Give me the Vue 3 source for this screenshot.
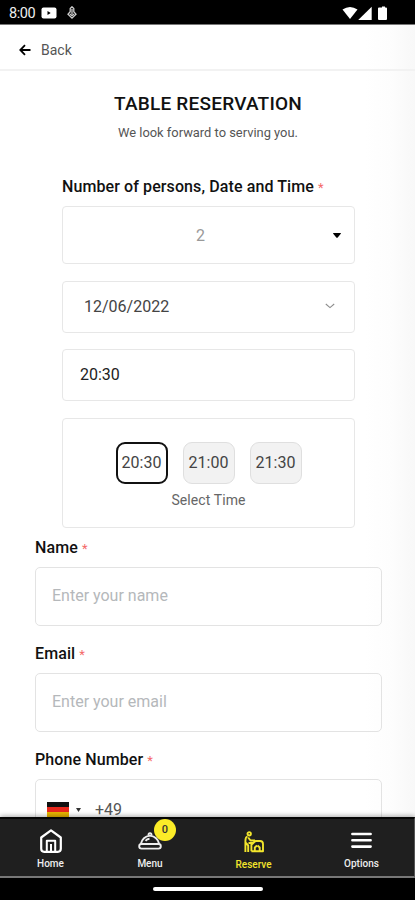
<script setup>
const times = ['20:30', '21:00', '21:30']
const fields = [
  { label: 'Name', placeholder: 'Enter your name' },
  { label: 'Email', placeholder: 'Enter your email' },
]
</script>

<template>
  <div class="screen">
    <div class="status">
      <span class="clock">8:00</span>
      <svg class="video" width="16" height="12" viewBox="0 0 16 12">
        <rect x="0.5" y="0.5" width="15" height="11" rx="2" fill="#fff" />
        <path d="M6.5 3.9v4.2L9.7 6z" fill="#000" />
      </svg>
      <svg class="app" width="10" height="14" viewBox="0 0 10 14" fill="none" stroke="#ccc" stroke-width="1.3">
        <path d="M5 .8L3.2 2.6v3.2L1 8.2l4 4 4-4-2.2-2.4V2.6zM5 3v5M3 8l2 1.6L7 8" />
      </svg>
      <svg class="signals" width="46" height="15" viewBox="0 0 46 15" fill="#fff">
        <path d="M0.5 3.6Q8 -1.8 15.5 3.6L8 13z" />
        <path d="M29.7 0.7v13.4H16.2z" />
        <path d="M38 1.6h2V.6h3v1h1q1 0 1 1V13q0 1-1 1h-7q-1 0-1-1V2.6q0-1 1-1z" />
      </svg>
    </div>

    <header class="top">
      <svg width="12" height="12" viewBox="0 0 12 12" fill="none" stroke="#000" stroke-width="1.8">
        <path d="M11.5 6H1.5M6 1.2L1.3 6 6 10.8" />
      </svg>
      <span>Back</span>
    </header>

    <main class="content">
      <h1>TABLE RESERVATION</h1>
      <p class="sub">We look forward to serving you.</p>

      <section class="booking">
        <div class="label wide">Number of persons, Date and Time <i>*</i></div>
        <div class="box persons">
          <span>2</span>
          <svg width="8" height="5" viewBox="0 0 8 5"><path d="M0 .5Q0 0 .5 0h7Q8 0 8 .5L4.5 4.7h-1z" /></svg>
        </div>
        <div class="box date">
          <span>12/06/2022</span>
          <svg width="10" height="6" viewBox="0 0 10 6" fill="none" stroke="#8d8d8d" stroke-width="1.1"><path d="M.8 1L5 4.6 9.2 1" /></svg>
        </div>
        <div class="box time">20:30</div>
        <div class="box slots">
          <div class="chips">
            <span v-for="(t, i) in times" :key="t" class="chip" :class="{ active: i === 0 }">{{ t }}</span>
          </div>
          <div class="hint">Select Time</div>
        </div>
      </section>

      <section class="details">
        <template v-for="f in fields" :key="f.label">
          <div class="label">{{ f.label }} <i>*</i></div>
          <div class="input">{{ f.placeholder }}</div>
        </template>
        <div class="label">Phone Number <i>*</i></div>
        <div class="input phone">
          <span class="flag"><b /><b /><b /></span>
          <svg width="5" height="4" viewBox="0 0 5 4"><path d="M0 0h5L2.5 4z" fill="#333" /></svg>
          <span class="code">+49</span>
        </div>
      </section>
    </main>

    <nav class="tabs">
      <div class="tab home">
        <svg width="24" height="26" viewBox="0 0 24 26" fill="none" stroke="#fff" stroke-width="2.2" stroke-linejoin="round">
          <path d="M2.2 9.5L12 2.4l9.8 7.1v11.3q0 3-3 3H5.2q-3 0-3-3z" />
          <path d="M7.8 23.5V12.8h8.4v10.7M12 16v7.5" stroke-width="2" />
        </svg>
        <span>Home</span>
      </div>
      <div class="tab menu">
        <svg width="24" height="20" viewBox="0 0 24 20" fill="none" stroke="#eee" stroke-width="1.9" stroke-linejoin="round">
          <path d="M2.8 13Q4.5 5.6 12 4.6 19.5 5.6 21.2 13M7.5 9.8Q9 8 11.5 7.8" />
          <rect x="1.2" y="13" width="21.6" height="4.6" rx="2.3" />
          <path d="M10.5 4.5Q10.3 2.2 12 2.2t1.5 2.3" />
        </svg>
        <span>Menu</span>
        <em>0</em>
      </div>
      <div class="tab reserve">
        <svg width="20" height="22" viewBox="0 0 20 22" fill="none" stroke="#f2e52c" stroke-width="1.9" stroke-linejoin="round">
          <circle cx="5.2" cy="2.8" r="1.7" />
          <path d="M3.5 5.4Q1.4 6 1.4 10v11M4.2 21v-6.5L2 12M4.2 6.5L6.5 9.5h4.5M4.5 12h4.5M7.4 20.3V13M7.4 20.3H19V13q0-3-3-3h-4.5L8 13.2M10.8 20v-3.5l2.2-2M15.7 20v-3.5l-2.2-2" />
        </svg>
        <span>Reserve</span>
      </div>
      <div class="tab options">
        <svg width="21" height="17" viewBox="0 0 21 17" stroke="#fff" stroke-width="2.6" stroke-linecap="round">
          <path d="M1.4 2h18.2M1.4 8.3h18.2M1.4 14.6h18.2" />
        </svg>
        <span>Options</span>
      </div>
    </nav>
    <div class="gesture"><span /></div>
  </div>
</template>

<style>
body { margin: 0; }
</style>

<style scoped>
* { box-sizing: border-box; }
.screen {
  width: 415px;
  height: 900px;
  overflow: hidden;
  display: flex;
  flex-direction: column;
  font-family: Roboto, sans-serif;
  color: #111;
  background: linear-gradient(90deg, #fff 365px, #fdfdfd 390px, #f8f8f8 415px);
}
svg { display: block; flex: none; }
.status {
  flex: none;
  height: 25px;
  background: #000;
  border-bottom: 1px solid #777;
  display: flex;
  align-items: center;
  padding: 2px 27px 0 9px;
}
.clock { color: #eee; font-size: 14.5px; letter-spacing: -0.4px; width: 32px; white-space: nowrap; }
.app { margin-left: 10px; }
.signals { margin-left: auto; }
.top {
  flex: none;
  height: 46px;
  border-bottom: 2px solid #f2f2f2;
  display: flex;
  align-items: center;
  gap: 10px;
  padding: 6px 0 0 19px;
  font-size: 14px;
  color: #555;
}
.content { flex: 1; min-height: 0; overflow: hidden; }
h1 {
  margin: 21px 0 0;
  font-size: 19px;
  line-height: 24px;
  font-weight: 500;
  text-align: center;
  letter-spacing: 0.22px;
  padding-left: 1px;
}
.sub { margin: 8px 0 0; padding-left: 1px; font-size: 12.9px; line-height: 18px; text-align: center; color: #555; }
.booking { margin: 35px 60px 0 62px; display: flex; flex-direction: column; gap: 16.5px; }
.label { font-size: 16px; line-height: 20px; font-weight: 500; letter-spacing: 0.1px; white-space: nowrap; }
.label i { color: #f46a6a; font-style: normal; font-size: 13px; font-weight: 400; }
.wide { margin-bottom: -8.5px; }
.box { border: 1.5px solid #e7e7e7; border-radius: 4px; display: flex; align-items: center; font-size: 16px; color: #444; }
.persons { height: 58px; padding: 0 13px 0 133px; justify-content: space-between; color: #999; }
.date { height: 52px; padding: 0 19px 1px 21px; justify-content: space-between; }
.time { height: 52px; padding: 0 0 1px 17px; color: #222; }
.slots { height: 110px; flex-direction: column; padding-top: 23.5px; }
.chips { display: flex; gap: 15px; }
.chip {
  width: 52px;
  height: 42px;
  padding-bottom: 2px;
  border-radius: 9px;
  border: 1px solid #dfdfdf;
  background: #f2f2f2;
  display: flex;
  align-items: center;
  justify-content: center;
}
.chip.active { background: #fff; border: 2px solid #111; }
.hint { margin-top: 7px; font-size: 14px; line-height: 18px; letter-spacing: 0.1px; color: #666; }
.details { margin: 10px 33px 0 35px; }
.input {
  height: 59px;
  margin: 8.5px 0 17.5px;
  border: 1.5px solid #e3e3e3;
  border-radius: 5px;
  padding: 0 0 2px 16px;
  display: flex;
  align-items: center;
  font-size: 16px;
  color: #b5b8bb;
}
.phone { padding: 2px 0 0 11px; color: #555; }
.flag { width: 22px; height: 16px; display: flex; flex-direction: column; }
.flag b { flex: 1; background: #111; }
.flag b:nth-child(2) { background: #e8281d; }
.flag b:nth-child(3) { background: #e8b500; }
.phone svg { margin-left: 7px; }
.code { margin-left: 14px; line-height: 14px; }
.tabs {
  flex: none;
  height: 61px;
  background: #1f1f1f;
  border-top: 2px solid #050505;
  border-bottom: 2px solid #777;
  border-right: 1px solid #555;
  box-shadow: 0 -1px 5px rgba(0, 0, 0, 0.35);
  position: relative;
  display: grid;
  grid-template-columns: 101px 98px 109px 107px;
}
.tab {
  position: relative;
  display: flex;
  flex-direction: column;
  align-items: center;
  justify-content: flex-end;
  padding-bottom: 6px;
  gap: 4px;
  color: #eee;
  font-size: 10px;
  line-height: 12px;
  font-weight: 500;
}
.menu svg { margin-bottom: 3px; }
.reserve { color: #f2e52c; padding-bottom: 5px; }
.reserve svg { margin-bottom: 2px; }
.options svg { margin-bottom: 5px; }
.menu em {
  position: absolute;
  left: 53px;
  top: 0;
  width: 22px;
  height: 22px;
  border-radius: 50%;
  background: #fbec28;
  color: #333;
  font-style: normal;
  font-size: 11px;
  line-height: 22px;
  text-align: center;
}
.gesture { flex: none; height: 22px; background: #000; display: flex; justify-content: center; }
.gesture span { width: 110px; height: 4px; margin: 9px 0 0 1px; border-radius: 2px; background: #fff; }
</style>
